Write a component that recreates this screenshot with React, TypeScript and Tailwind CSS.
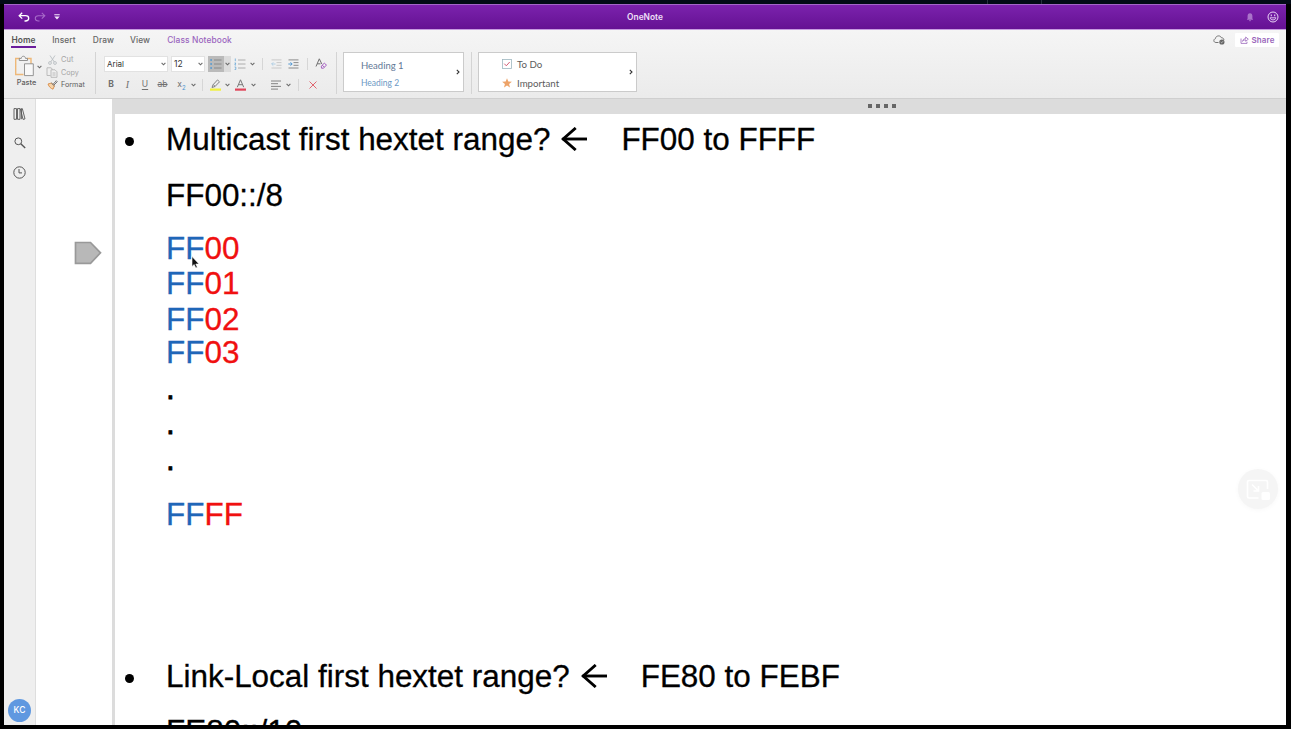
import type { ReactNode } from "react";

const Chevron = () => (
  <svg className="shrink-0" width="5" height="4" viewBox="0 0 5 4" fill="none" stroke="#6a6a6a" strokeWidth="1.1">
    <path d="M0.6 0.8 2.5 2.8 4.4 0.8" />
  </svg>
);

const ChevronRight = () => (
  <svg width="4" height="6" viewBox="0 0 4 6" fill="none" stroke="#333" strokeWidth="1.1">
    <path d="M0.8 0.8 3 3 0.8 5.2" />
  </svg>
);

const Slot = ({ w, children }: { w: string; children?: ReactNode }) => (
  <div className={`flex shrink-0 items-center justify-center ${w}`}>{children}</div>
);

const Divider = () => <div className="h-[12px] w-px bg-[#d6d6d6]" />;

const TitleBar = () => (
  <header className="flex h-[26px] shrink-0 items-center border-t border-b border-t-[#a466c8] border-b-[#c79be0] bg-linear-to-b from-[#7b22ad] to-[#651193]">
    <div className="flex w-[420px] items-center pl-[14px]">
      <svg width="12" height="10" viewBox="0 0 12 10" fill="none" stroke="#fff" strokeWidth="1.3">
        <path d="M4.200 0.800 1.200 3.700 4.200 6.600M1.400 3.700H7.600C9.600 3.700 10.700 4.800 10.700 6.300S9.600 9 7.400 9H6.500" />
      </svg>
      <svg className="ml-[4px]" width="12" height="10" viewBox="0 0 12 10" fill="none" stroke="#a76bc9" strokeWidth="1.1">
        <path d="M7.800 0.800 10.800 3.700 7.800 6.600M10.600 3.700H4.400C2.400 3.700 1.300 4.800 1.300 6.300S2.400 9 4.600 9H5.500" />
      </svg>
      <svg className="ml-[8px]" width="6" height="6" viewBox="0 0 6 6" fill="#f3e6fa">
        <path d="M0.300 0.300H5.700V1.300H0.300ZM0.300 2.500H5.700L3 5.600Z" />
      </svg>
    </div>
    <div className="flex-1 text-center text-[8.400px] font-semibold text-[#efe0f8]">OneNote</div>
    <div className="flex w-[420px] items-center justify-end pr-[7px]">
      <svg width="8" height="9" viewBox="0 0 8 9" fill="#aa74ca">
        <path d="M4 0.300C5.700 0.300 6.400 1.600 6.400 3V5.400L7.200 6.800H0.800L1.600 5.400V3C1.600 1.600 2.300 0.300 4 0.300ZM3 7.300H5C5 8.700 3 8.700 3 7.300Z" />
      </svg>
      <svg className="ml-[13px]" width="12" height="12" viewBox="0 0 12 12" fill="none" stroke="#ead5f6">
        <circle cx="6" cy="6" r="5" strokeWidth="1" />
        <path d="M4.300 3.400V5.300M7.700 3.400V5.300" strokeWidth="1.100" />
        <path d="M3 6.800C3.500 9.600 8.500 9.600 9 6.800Z" strokeWidth="0.900" />
      </svg>
    </div>
  </header>
);

const Tabs = () => (
  <nav className="flex h-[20px] shrink-0 text-[8.400px] font-medium tracking-[0.100px] text-[#666]">
    <div className="w-[41px] pl-[7px]">
      <div className="h-[18px] w-[25px] border-b-2 border-[#6b1e9c] text-center leading-[20px] font-semibold text-[#555]">Home</div>
    </div>
    <div className="flex h-[20px] w-[38px] items-center justify-center">Insert</div>
    <div className="flex h-[20px] w-[41px] items-center justify-center">Draw</div>
    <div className="flex h-[20px] w-[32px] items-center justify-center">View</div>
    <div className="flex h-[20px] w-[87px] items-center justify-center text-[#9a64be]">Class Notebook</div>
    <div className="flex h-[20px] flex-1 items-center justify-end pr-[7px]">
      <svg width="12" height="10" viewBox="0 0 12 10" fill="none" stroke="#777" strokeWidth="1">
        <path d="M5.500 7.500H3C0.300 7.500 0.200 4.200 2.400 3.700C2.700 0.300 7.600 0 8.300 2.700C9.800 2.600 11 3.700 10.900 5" />
        <circle cx="8.900" cy="7" r="2.600" fill="#666" stroke="none" />
        <path d="M7.700 7 8.600 7.900 10.100 6.200" stroke="#eee" strokeWidth="0.600" />
      </svg>
      <div className="ml-[10px] flex h-[14px] w-[44px] items-center justify-center gap-[3px] rounded-[1px] bg-white text-[8px] font-semibold text-[#9a67bb]">
        <svg width="9" height="8" viewBox="0 0 9 8" fill="none" stroke="#9a67bb" strokeWidth="0.800">
          <path d="M1 2.500V7.400H7V5.800M2.600 5.400C2.800 3.500 3.900 2.700 5.700 2.700V1L8.300 3.200 5.700 5.300V3.900C4.200 3.900 3.300 4.300 2.600 5.400Z" />
        </svg>
        <span>Share</span>
      </div>
    </div>
  </nav>
);

const Clipboard = () => (
  <div className="flex h-[42px] w-[92px] shrink-0 border-r border-[#d4d4d4]">
    <div className="w-[41px] pt-[3px] pl-[10px]">
      <div className="flex items-center gap-[2px]">
        <svg width="21" height="23" viewBox="0 0 21 23" fill="none">
          <path d="M6 3.500H1.700V19.500H9.500M13 3.500H17V9" stroke="#eeb878" strokeWidth="1.400" />
          <path d="M5.300 5.500V3.400H7.300C7.500 0.500 11.300 0.500 11.500 3.400H13.500V5.500Z" fill="#f4f4f4" stroke="#888" strokeWidth="0.900" />
          <path d="M10.500 8.800H19.300V20.600H10.500Z" fill="#f8f8f8" stroke="#8a8a8a" strokeWidth="0.900" />
        </svg>
        <Chevron />
      </div>
      <div className="w-[25px] text-center text-[7.300px] leading-[10px] font-medium text-[#606060]">Paste</div>
    </div>
    <div className="flex flex-col pt-[2px] text-[7.500px] leading-[12.600px] text-[#a5a5a5]">
      <div className="flex items-center">
        <Slot w="w-[14px]">
          <svg width="9" height="10" viewBox="0 0 9 10" fill="none" stroke="#b9bec2" strokeWidth="0.900">
            <path d="M2 0.500 6.300 7M7 0.500 2.700 7" />
            <circle cx="2" cy="8" r="1.400" />
            <circle cx="7" cy="8" r="1.400" />
          </svg>
        </Slot>
        <span className="pl-[2px]">Cut</span>
      </div>
      <div className="flex items-center">
        <Slot w="w-[14px]">
          <svg width="12" height="11" viewBox="0 0 12 11" fill="none" stroke="#b5b5b5" strokeWidth="0.900">
            <path d="M4.500 8.500H1V0.800H5L6.800 2.500" />
            <path d="M5 2.800H9L11 4.800V10.300H5ZM6.500 6H9.500M6.500 8H9.500" />
          </svg>
        </Slot>
        <span className="pl-[2px] text-[7.200px]">Copy</span>
      </div>
      <div className="flex items-center text-[#606060]">
        <Slot w="w-[14px]">
          <svg width="11" height="10" viewBox="0 0 11 10" fill="none">
            <path d="M1 4 4.600 3 7.400 5.800 6 9.200C4 8.500 2 7 1 4Z" fill="#f6d3a8" stroke="#d98b45" strokeWidth="0.900" />
            <path d="M4.200 2.800 7.600 6.200M6 4.400 9.300 0.700 10.300 1.700 7 5" stroke="#777" strokeWidth="1" />
          </svg>
        </Slot>
        <span className="pl-[2px] text-[7.200px]">Format</span>
      </div>
    </div>
  </div>
);

const ListIcon = ({ numbered = false }: { numbered?: boolean }) => (
  <svg width="12" height="12" viewBox="0 0 12 12" fill="none">
    <path d="M4 2H11.500M4 6H11.500M4 10H11.500" stroke={numbered ? "#a5a5a5" : "#858585"} strokeWidth="0.900" />
    {numbered ? (
      <path d="M1.300 0.500V3.200M0.500 5H1.800L0.800 7H2M0.600 9H1.800V11.500H0.600" stroke="#65a6d6" strokeWidth="0.800" />
    ) : (
      <path d="M0.300 2H2M0.300 6H2M0.300 10H2" stroke="#4f98d2" strokeWidth="1.700" />
    )}
  </svg>
);

const IndentIcon = ({ active = false }: { active?: boolean }) => (
  <svg width="11" height="10" viewBox="0 0 11 10" fill="none" stroke={active ? "#808080" : "#c4c4c4"} strokeWidth="0.900">
    <path d="M0.500 0.900H10.500M5.500 3.600H10.500M5.500 6.300H10.500M0.500 9H10.500" />
    <path d={active ? "M0.300 5H4M2.500 3.300 4.200 5 2.500 6.700" : "M4.500 5H0.800M2.300 3.300 0.600 5 2.300 6.700"} stroke={active ? "#4490cf" : "#a9cbe3"} />
  </svg>
);

const FontTools = () => (
  <div className="flex h-[42px] w-[241px] shrink-0 flex-col border-r border-[#d4d4d4] pl-[8px] text-[8px] text-[#333]">
    <div className="flex h-[23px] items-center">
      <div className="flex h-[16px] w-[64px] items-center justify-between border border-[#e2e2e2] bg-white pr-[1px] pl-[2px]">
        <span>Arial</span>
        <Chevron />
      </div>
      <div className="ml-[3px] flex h-[16px] w-[34px] items-center justify-between border border-[#e2e2e2] bg-white pr-[1px] pl-[2px]">
        <span className="pt-px text-[8.500px]">12</span>
        <Chevron />
      </div>
      <div className="ml-[3px] flex h-[16px] w-[16px] items-center justify-center bg-[#bababa]">
        <ListIcon />
      </div>
      <div className="flex h-[16px] w-[7px] items-center justify-center bg-[#dcdcdc]">
        <Chevron />
      </div>
      <Slot w="w-[18px]"><ListIcon numbered /></Slot>
      <Slot w="w-[7px]"><Chevron /></Slot>
      <Slot w="w-[12px]"><Divider /></Slot>
      <Slot w="w-[17px]"><IndentIcon /></Slot>
      <Slot w="w-[17px]"><IndentIcon active /></Slot>
      <Slot w="w-[11px]"><Divider /></Slot>
      <Slot w="w-[17px]">
        <svg width="13" height="12" viewBox="0 0 13 12" fill="none">
          <path d="M1 8.500 4.300 0.800 6.800 6M2.200 5.800H5.500" stroke="#707070" strokeWidth="1" />
          <path d="M6.300 8.100 9.300 5.200 11.500 7.100 8.300 10.200H6.500ZM7.200 7.200 9.400 9.200" stroke="#a35fc0" strokeWidth="1" />
        </svg>
      </Slot>
    </div>
    <div className="flex h-[19px] items-center text-[8.500px] text-[#707070]">
      <Slot w="w-[14px]"><span className="font-bold">B</span></Slot>
      <Slot w="w-[19px]"><span className="font-['Liberation_Serif'] text-[10px] italic">I</span></Slot>
      <Slot w="w-[16px]"><span className="underline underline-offset-2">U</span></Slot>
      <Slot w="w-[19px]"><span className="line-through">ab</span></Slot>
      <Slot w="w-[19px]">
        <span>x</span>
        <span className="pt-[5px] text-[6px] leading-[5px] text-[#4c96d0]">2</span>
      </Slot>
      <Slot w="w-[5px]"><Chevron /></Slot>
      <Slot w="w-[12px]"><Divider /></Slot>
      <Slot w="w-[15px]">
        <svg width="11" height="12" viewBox="0 0 11 12" fill="none">
          <path d="M0 9.500H11V11.700H0Z" fill="#f1f13c" />
          <path d="M3 5.800 7.500 0.900 9.500 2.800 5 7.500 2 8.500ZM3.300 5.700 5.200 7.400" stroke="#777" strokeWidth="0.900" />
        </svg>
      </Slot>
      <Slot w="w-[9px]"><Chevron /></Slot>
      <Slot w="w-[17px]">
        <svg width="11" height="12" viewBox="0 0 11 12" fill="none">
          <path d="M0 9.500H11V11.700H0Z" fill="#e0455a" />
          <path d="M2.300 8.200 5.500 0.800 8.700 8.200M3.500 5.700H7.500" stroke="#777" strokeWidth="1" />
        </svg>
      </Slot>
      <Slot w="w-[8px]"><Chevron /></Slot>
      <div className="ml-[14px]">
        <svg width="10" height="10" viewBox="0 0 10 10" stroke="#777" strokeWidth="0.900">
          <path d="M0 1H10M0 3.700H7M0 6.400H10M0 9.100H7" />
        </svg>
      </div>
      <div className="ml-[5px]"><Chevron /></div>
      <Slot w="w-[15px]"><Divider /></Slot>
      <Slot w="w-[13px]">
        <svg width="8" height="8" viewBox="0 0 8 8" stroke="#e0656f" strokeWidth="1">
          <path d="M0.500 0.500 7.500 7.500M7.500 0.500 0.500 7.500" />
        </svg>
      </Slot>
    </div>
  </div>
);

const Galleries = () => (
  <>
    <div className="flex h-[42px] w-[135px] shrink-0 border-r border-[#d4d4d4] pl-[6px]">
      <div className="flex h-[40px] w-[121px] items-center justify-between border border-[#cbcbcb] bg-white pr-[3px] pl-[17px] font-['Lato']">
        <div className="pt-[5px]">
          <div className="text-[9.500px] leading-[18px] text-[#5f7896]">Heading 1</div>
          <div className="text-[8.500px] leading-[17px] text-[#6c98c4]">Heading 2</div>
        </div>
        <ChevronRight />
      </div>
    </div>
    <div className="h-[42px] pl-[6px]">
      <div className="flex h-[40px] w-[159px] items-center justify-between border border-[#cbcbcb] bg-white pr-[3px] pl-[23px] font-['Lato'] text-[9.700px] text-[#5c5c5c]">
        <div>
          <div className="flex h-[20px] items-center gap-[5px] pt-[3px]">
            <svg width="10" height="10" viewBox="0 0 10 10" fill="none">
              <rect x="0.500" y="0.500" width="9" height="9" stroke="#9fb7c0" strokeWidth="0.800" />
              <path d="M2.300 4.700 4.300 6.800 7.700 3" stroke="#d45d76" />
            </svg>
            <span>To Do</span>
          </div>
          <div className="flex h-[19px] items-center gap-[5px] pt-[2px]">
            <svg width="10" height="10" viewBox="0 0 10 10" fill="#eda368">
              <path d="M5 0.200 6.300 3.500 9.900 3.700 7.100 6 8 9.600 5 7.600 2 9.600 2.900 6 0.100 3.700 3.700 3.500Z" />
            </svg>
            <span>Important</span>
          </div>
        </div>
        <ChevronRight />
      </div>
    </div>
  </>
);

const Rail = () => (
  <aside className="flex w-[32px] shrink-0 flex-col items-center border-r border-[#dedede] bg-[#efefef] pt-[9px]">
    <svg width="13" height="12" viewBox="0 0 13 12" fill="none" stroke="#555" strokeWidth="0.900">
      <path d="M1 0.600H3.500V11.300H1ZM4.500 0.600H7V11.300H4.500ZM7.500 1 9.300 0.600 12 10.900 10 11.400ZM8.400 1V11.200" />
    </svg>
    <svg className="mt-[17px]" width="12" height="12" viewBox="0 0 12 12" fill="none" stroke="#555">
      <circle cx="4.300" cy="4.300" r="3.400" strokeWidth="1" />
      <path d="M6.800 6.800 11.200 11" strokeWidth="1.400" />
    </svg>
    <svg className="mt-[17px]" width="13" height="13" viewBox="0 0 13 13" fill="none" stroke="#555" strokeWidth="1">
      <circle cx="6.500" cy="6.500" r="5.700" />
      <path d="M6 3V6.900H9" />
    </svg>
    <div className="mt-auto mb-[3px] flex size-[23px] items-center justify-center rounded-full bg-[#5f98e0] text-[8.500px] font-medium text-white">KC</div>
  </aside>
);

const Arrow = () => (
  <svg className="mt-[5px] mr-[13px] ml-[11px] shrink-0" width="26" height="24" viewBox="0 0 26 24" fill="none" stroke="#000" strokeWidth="2.900">
    <path d="M1.500 12H26" />
    <path d="M14.700 1 2.200 12 14.700 23" />
  </svg>
);

const Question = ({ text, answer, h }: { text: string; answer: string; h: string }) => (
  <div className={`flex shrink-0 ${h}`}>
    <div className="w-[51px] pt-[15px] pl-[10px]">
      <div className="size-[9px] rounded-full bg-black" />
    </div>
    <span>{text}</span>
    <Arrow />
    <span className="pl-[21px]">{answer}</span>
  </div>
);

const Hextet = ({ tail, h }: { tail: string; h: string }) => (
  <div className={`shrink-0 pl-[51px] text-[#f01010] ${h}`}>
    <span className="text-[#1f66b8]">FF</span>
    {tail}
  </div>
);

const Notes = () => (
  <main className="relative flex min-w-0 flex-1 flex-col border-l-[3px] border-[#dcdcdc] bg-white">
    <div className="flex h-[15px] shrink-0 items-center justify-end gap-[4px] bg-[#dcdcdc] pr-[390px] pb-[2px]">
      <i className="size-[4px] bg-[#666]" />
      <i className="size-[4px] bg-[#666]" />
      <i className="size-[4px] bg-[#666]" />
      <i className="size-[4px] bg-[#666]" />
    </div>
    <div className="flex min-h-0 flex-1 flex-col overflow-hidden pt-[8px] font-['Liberation_Sans'] text-[31.450px] leading-[36px] whitespace-nowrap text-black [-webkit-text-stroke:0.300px_currentColor]">
      <Question h="h-[56px]" text="Multicast first hextet range?" answer="FF00 to FFFF" />
      <div className="h-[53px] shrink-0 pl-[51px]">FF00::/8</div>
      <Hextet h="h-[35px]" tail="00" />
      <Hextet h="h-[36px]" tail="01" />
      <Hextet h="h-[33px]" tail="02" />
      <Hextet h="h-[36px]" tail="03" />
      <div className="h-[35px] shrink-0 pl-[51px] [-webkit-text-stroke:0.800px_currentColor]">.</div>
      <div className="h-[36px] shrink-0 pl-[51px] [-webkit-text-stroke:0.800px_currentColor]">.</div>
      <div className="h-[55px] shrink-0 pl-[51px] [-webkit-text-stroke:0.800px_currentColor]">.</div>
      <Hextet h="h-[162px]" tail="FF" />
      <Question h="h-[55px]" text="Link-Local first hextet range?" answer="FE80 to FEBF" />
      <div className="h-[36px] shrink-0 pl-[51px]">FE80::/10</div>
    </div>
    <svg className="absolute top-[157px] left-[76px]" width="9" height="13" viewBox="0 0 9 13">
      <path d="M1 0.500V10.500L3.200 8.500 4.800 12 6.300 11.300 4.800 8H8Z" fill="#111" stroke="#fff" strokeWidth="0.600" />
    </svg>
    <div className="absolute top-[370px] right-[8px] flex size-[40px] items-center justify-center rounded-full bg-[#f5f5f5] shadow-[0_1px_5px_#f8f8f8]">
      <svg width="24" height="21" viewBox="0 0 24 21" fill="none" stroke="#fff" strokeWidth="1.700">
        <path d="M12.500 19H3Q1.500 19 1.500 17.500V3Q1.500 1.500 3 1.500H20Q21.500 1.500 21.500 3V10" />
        <path d="M6 5.500 12 11.500M12.500 7V12H7.500" />
        <rect x="15.500" y="13" width="8.500" height="8" rx="1.500" fill="#fff" stroke="none" />
      </svg>
    </div>
  </main>
);

export default function App() {
  return (
    <div className="h-[729px] w-[1291px] overflow-hidden bg-[#000] font-['Inter',sans-serif]">
      <div className="flex h-[4px] bg-[#020b16]">
        <div className="ml-[987px] w-[55px] border-x border-[#26323d]" />
      </div>
      <div className="mr-[5px] ml-[4px] flex h-[721px] flex-col overflow-hidden">
        <TitleBar />
        <section className="flex h-[69px] shrink-0 flex-col border-b border-[#cfcfcf] bg-linear-to-b from-[#f5f5f5] to-[#ebebeb]">
          <Tabs />
          <div className="flex pt-[2px]">
            <Clipboard />
            <FontTools />
            <Galleries />
          </div>
        </section>
        <div className="flex min-h-0 flex-1">
          <Rail />
          <div className="w-[76px] shrink-0 bg-white pt-[142px] pl-[38px]">
            <svg width="28" height="24" viewBox="0 0 28 24">
              <path d="M1.500 1.500H16.500L26.500 11.800 16.500 22.300H1.500Z" fill="#b8b8b8" stroke="#999" strokeWidth="1.700" />
            </svg>
          </div>
          <Notes />
        </div>
      </div>
    </div>
  );
}
